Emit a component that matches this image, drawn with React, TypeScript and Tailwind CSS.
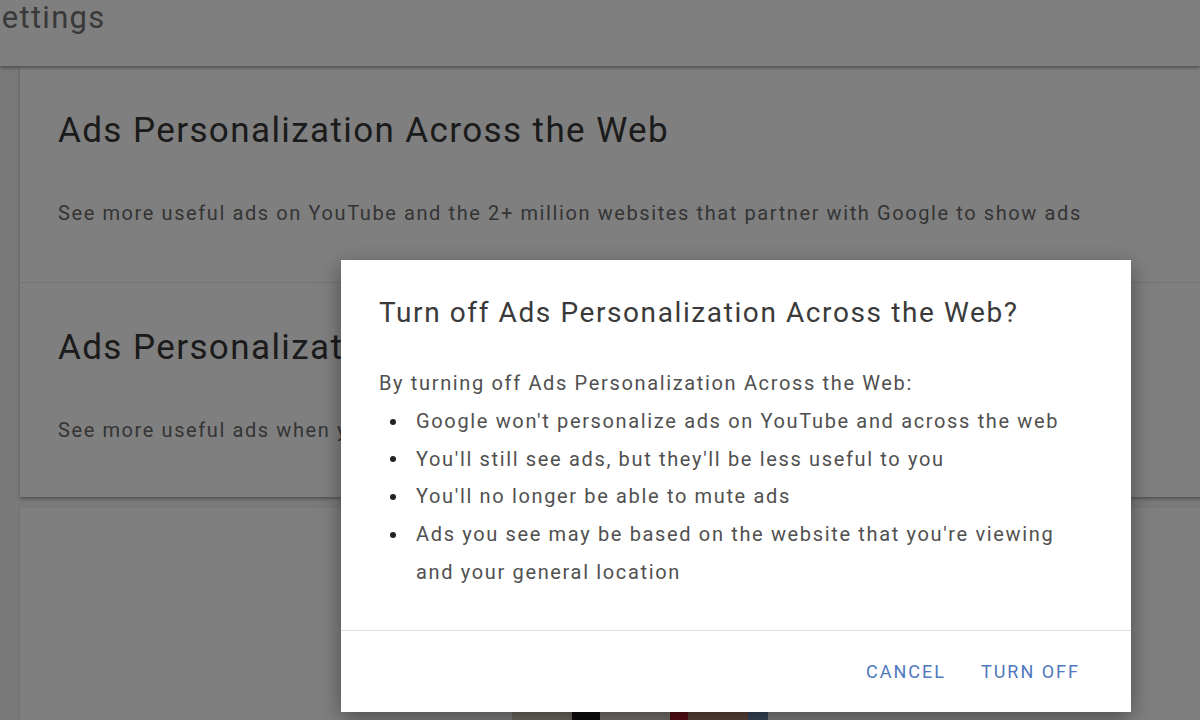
import { useState } from 'react';

const bullets = [
  "Google won't personalize ads on YouTube and across the web",
  "You'll still see ads, but they'll be less useful to you",
  "You'll no longer be able to mute ads",
  "Ads you see may be based on the website that you're viewing and your general location",
];

// Settings section inside the big card
function Section({ title, text, divider }: { title: string; text: string; divider?: boolean }) {
  return (
    <div className={`pl-[38px] pt-[45px] ${divider ? 'h-[217px] border-b border-[#e6e6e6]' : 'h-[214px]'}`}>
      <h2 className="text-[35px] leading-[40px] tracking-[1.4px] text-[#363636] whitespace-nowrap">{title}</h2>
      <p className="mt-[50px] text-[20px] leading-[24px] tracking-[1.6px] text-[#6a6a6a] whitespace-nowrap">{text}</p>
    </div>
  );
}

export default function App() {
  const [open, setOpen] = useState(true);

  return (
    <div className="relative w-[1200px] h-[720px] overflow-hidden bg-[#f2f2f2] font-['Roboto',sans-serif]">
      {/* Top bar */}
      <header className="h-[66px] bg-white shadow-[0_2px_3px_rgba(0,0,0,0.35)] relative z-10">
        <div className="ml-[-18px] text-[31px] leading-[36px] tracking-[1.3px] text-[#727272]">Settings</div>
      </header>

      {/* Cards */}
      <div className="pl-[20px] flex flex-col gap-[11px]">
        <div className="w-[1200px] bg-white shadow-[0_2px_3px_rgba(0,0,0,0.3)]">
          <Section
            divider
            title="Ads Personalization Across the Web"
            text="See more useful ads on YouTube and the 2+ million websites that partner with Google to show ads"
          />
          <Section
            title="Ads Personalization on Google Search"
            text="See more useful ads when you use Google Search"
          />
        </div>
        <div className="w-[1200px] h-[300px] bg-white shadow-[0_1px_2px_rgba(0,0,0,0.2)] pt-[204px] flex justify-center">
          <div className="flex h-[40px] ml-[40px]">
            <div className="w-[60px] bg-[#d9d0c4]" />
            <div className="w-[28px] bg-[#1a1a1a]" />
            <div className="w-[70px] bg-[#e8e2da]" />
            <div className="w-[18px] bg-[#b0222e]" />
            <div className="w-[60px] bg-[#b88a72]" />
            <div className="w-[20px] bg-[#6f8fb8]" />
          </div>
        </div>
      </div>

      {/* Scrim */}
      <div className="absolute inset-0 z-20 bg-black/50" />

      {/* Dialog */}
      {open && (
        <div className="absolute z-30 left-[341px] top-[260px] w-[790px] h-[452px] bg-white shadow-[0_6px_20px_rgba(0,0,0,0.4)] flex flex-col">
          <div className="px-[38px] pt-[36px] flex-1">
            <h3 className="text-[28px] leading-[34px] tracking-[1.6px] text-[#3a3a3a]">
              Turn off Ads Personalization Across the Web?
            </h3>
            <p className="mt-[35px] text-[20px] leading-[37.75px] tracking-[1.65px] text-[#505050]">
              By turning off Ads Personalization Across the Web:
            </p>
            <ul className="text-[20px] leading-[37.75px] tracking-[1.65px] text-[#505050]">
              {bullets.map((b) => (
                <li key={b} className="flex">
                  <div className="w-[37px] h-[37.75px] shrink-0 flex items-center pl-[11px]">
                    <div className="w-[6px] h-[6px] rounded-full bg-[#222]" />
                  </div>
                  <span className="w-[660px]">{b}</span>
                </li>
              ))}
            </ul>
          </div>
          <div className="h-[82px] border-t border-[#e0e0e0] flex items-center justify-end pr-[35px] gap-[3px]">
            <button
              onClick={() => setOpen(false)}
              className="px-[16px] h-[40px] text-[18px] tracking-[2px] text-[#4f78bd]"
            >
              CANCEL
            </button>
            <button className="px-[16px] h-[40px] text-[18px] tracking-[2px] text-[#4f78bd]">
              TURN OFF
            </button>
          </div>
        </div>
      )}
    </div>
  );
}
